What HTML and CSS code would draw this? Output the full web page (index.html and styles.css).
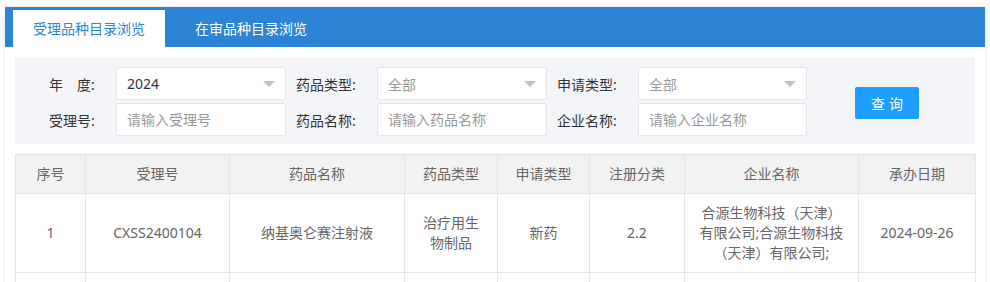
FILE: index.html
```html
<!DOCTYPE html>
<html lang="zh-CN">
<head>
<meta charset="utf-8">
<title>受理品种目录浏览</title>
<link rel="stylesheet" href="styles.css">
</head>
<body>
<div class="page">
  <div class="tabs">
    <div class="tab active">受理品种目录浏览</div>
    <div class="tab">在审品种目录浏览</div>
  </div>
  <div class="content">
    <div class="filters">
      <div class="grid">
        <label class="lbl first">年　度:</label>
        <div class="field select"><span class="val">2024</span><i class="arrow"></i></div>
        <label class="lbl">药品类型:</label>
        <div class="field select"><span class="ph">全部</span><i class="arrow"></i></div>
        <label class="lbl">申请类型:</label>
        <div class="field select"><span class="ph">全部</span><i class="arrow"></i></div>
        <div class="btn-cell"><button class="btn">查询</button></div>

        <label class="lbl first">受理号:</label>
        <input class="field" type="text" placeholder="请输入受理号">
        <label class="lbl">药品名称:</label>
        <input class="field" type="text" placeholder="请输入药品名称">
        <label class="lbl">企业名称:</label>
        <input class="field" type="text" placeholder="请输入企业名称">
      </div>
    </div>

    <table class="list">
      <colgroup>
        <col style="width:70px">
        <col style="width:144px">
        <col style="width:175px">
        <col style="width:93px">
        <col style="width:92px">
        <col style="width:95px">
        <col style="width:174px">
        <col style="width:117px">
      </colgroup>
      <thead>
        <tr>
          <th>序号</th>
          <th>受理号</th>
          <th>药品名称</th>
          <th>药品类型</th>
          <th>申请类型</th>
          <th>注册分类</th>
          <th>企业名称</th>
          <th>承办日期</th>
        </tr>
      </thead>
      <tbody>
        <tr>
          <td>1</td>
          <td>CXSS2400104</td>
          <td>纳基奥仑赛注射液</td>
          <td>治疗用生物制品</td>
          <td>新药</td>
          <td>2.2</td>
          <td class="company">合源生物科技（天津）有限公司;合源生物科技（天津）有限公司;</td>
          <td>2024-09-26</td>
        </tr>
        <tr class="empty">
          <td></td><td></td><td></td><td></td><td></td><td></td><td></td><td></td>
        </tr>
      </tbody>
    </table>
  </div>
</div>
</body>
</html>
```

FILE: styles.css
```css
* { box-sizing: border-box; }

html, body {
  margin: 0;
  padding: 0;
  background: #ffffff;
}

body {
  font-family: "Noto Sans", "Noto Sans CJK SC", sans-serif;
  font-size: 14px;
  color: #333;
}

.page {
  margin: 7px 0 0 5px;
  width: 980px;
  background: #fff;
  box-shadow: 0 0 3px rgba(0, 0, 0, 0.12);
}

.tabs {
  display: flex;
  align-items: flex-end;
  gap: 10px;
  height: 40px;
  padding-left: 8px;
  background: #2b84d6;
}

.tab {
  height: 37px;
  line-height: 37px;
  padding: 0 20px;
  color: #fff;
  font-size: 14px;
}

.tab.active {
  background: #fff;
  color: #2b84d6;
}

.content {
  padding: 10px 10px 0 10px;
}

.filters {
  background: #f4f5f8;
  padding: 10px 0 8px 34px;
}

.grid {
  display: grid;
  grid-template-columns: 67px 170px 91px 170px 91px 169px auto;
  grid-template-rows: 33px 33px;
  row-gap: 3px;
  align-items: center;
}

.lbl {
  color: #333;
  padding-left: 10px;
  white-space: nowrap;
}

.lbl.first {
  padding-left: 0;
}

.field {
  display: flex;
  align-items: center;
  height: 33px;
  width: 100%;
  padding: 0 10px;
  border: 1px solid #e6e6e6;
  border-radius: 2px;
  background: #fff;
  font-family: inherit;
  font-size: 14px;
  color: #333;
  outline: none;
}

.field::placeholder {
  color: #999;
}

.select .val { color: #333; }
.select .ph { color: #999; }

.arrow {
  margin-left: auto;
  width: 0;
  height: 0;
  border-top: 6px solid #c2c2c2;
  border-left: 6px solid transparent;
  border-right: 6px solid transparent;
}

.btn-cell {
  grid-column: 7;
  grid-row: 1 / span 2;
  padding-left: 48px;
  padding-top: 3px;
}

.btn {
  width: 64px;
  height: 32px;
  border: none;
  border-radius: 2px;
  background: #1e9fff;
  color: #fff;
  font-family: inherit;
  font-size: 14px;
  letter-spacing: 4px;
  text-indent: 4px;
  padding: 0;
}

.list {
  margin-top: 10px;
  width: 960px;
  table-layout: fixed;
  border-collapse: collapse;
  color: #666;
}

.list th,
.list td {
  border: 1px solid #e6e6e6;
  padding: 9px 15px;
  line-height: 20px;
  text-align: center;
  vertical-align: middle;
  font-weight: normal;
}

.list th {
  background: #f2f2f2;
  color: #666;
}

.list td.company {
  padding-left: 13px;
  padding-right: 13px;
}

.list tr.empty td {
  height: 79px;
}
```
